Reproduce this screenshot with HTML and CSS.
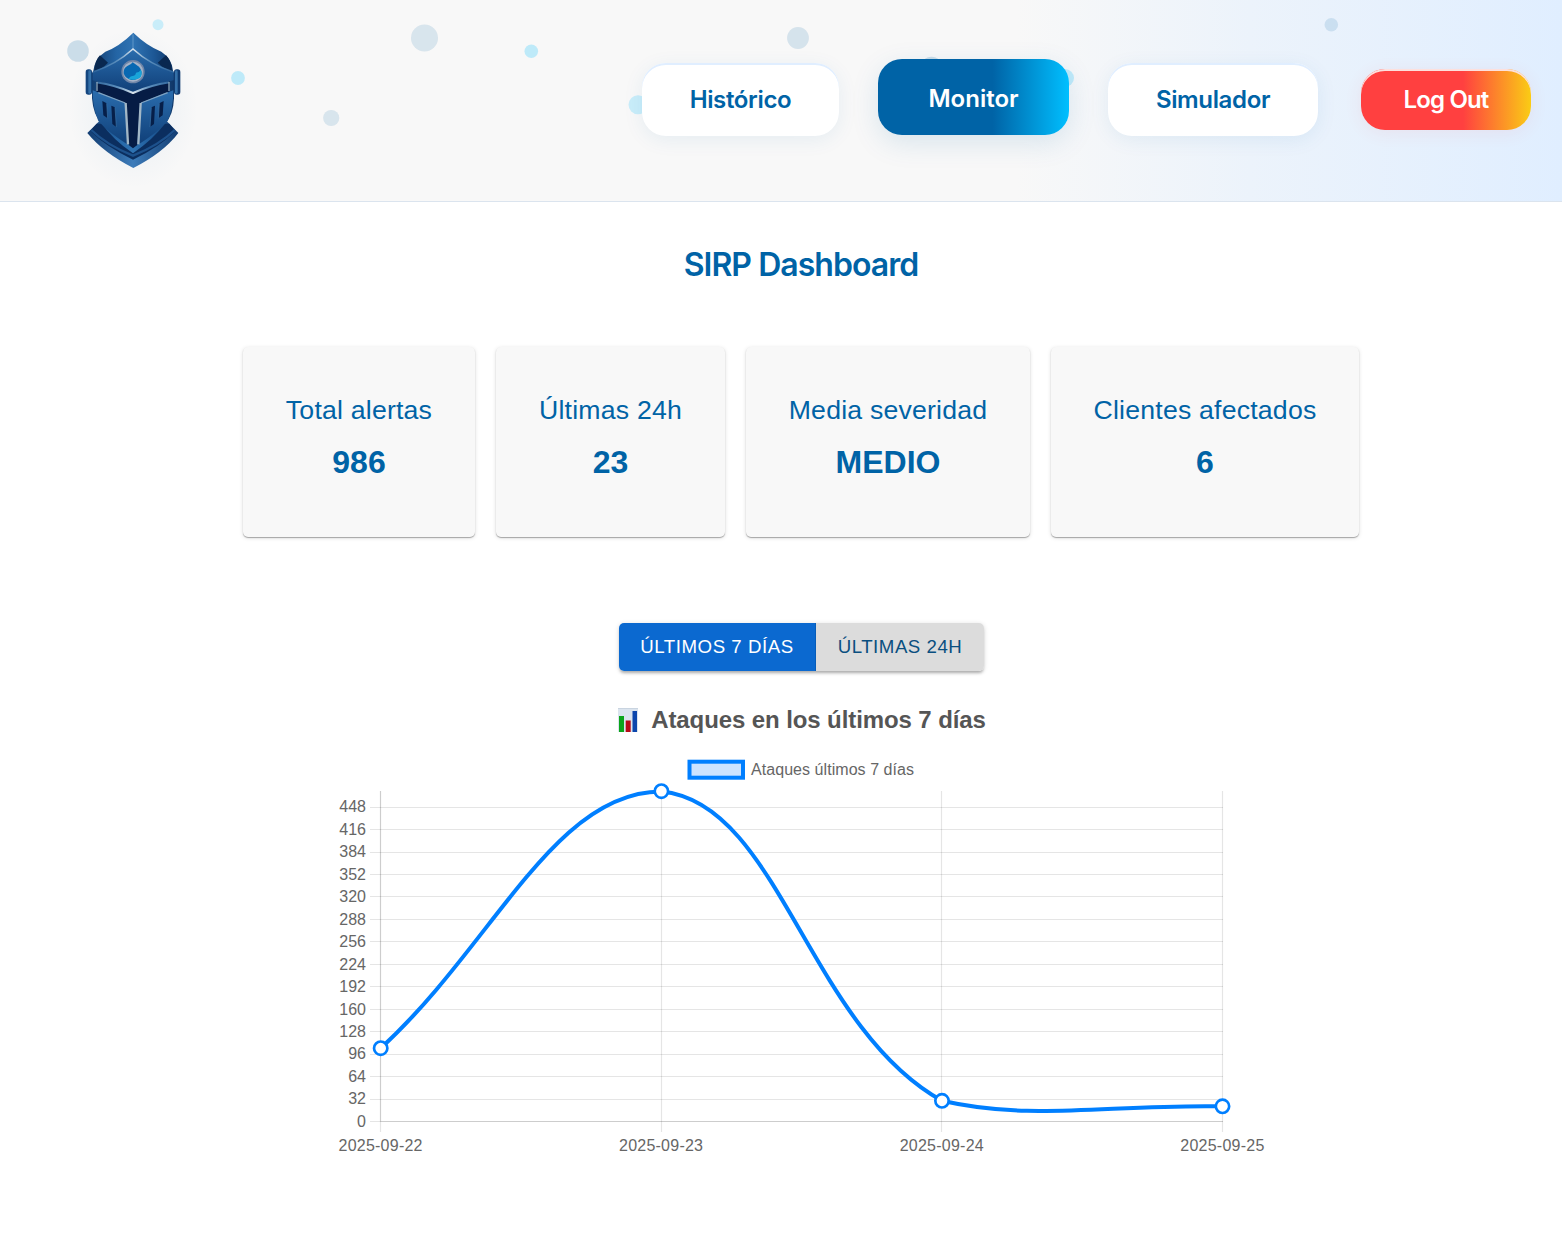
FILE: index.html
```html
<!DOCTYPE html>
<html lang="es">
<head>
<meta charset="utf-8">
<title>SIRP Dashboard</title>
<link rel="stylesheet" href="styles.css">
</head>
<body>
<header class="header">
  <svg class="bubbles" viewBox="0 0 1562 201" aria-hidden="true">
    <g fill="#0063a6">
      <circle cx="78" cy="51" r="10.8" opacity=".18"/>
      <circle cx="331.2" cy="118" r="8.1" opacity=".13"/>
      <circle cx="424.5" cy="38" r="13.5" opacity=".13"/>
      <circle cx="798" cy="38" r="10.9" opacity=".14"/>
      <circle cx="931.5" cy="67.500" r="10.8" opacity=".18"/>
      <circle cx="1331.300" cy="24.700" r="6.800" opacity=".13"/>
    </g>
    <g fill="#00bfff">
      <circle cx="158" cy="24.700" r="5.500" opacity=".19"/>
      <circle cx="238" cy="78" r="6.900" opacity=".23"/>
      <circle cx="531.300" cy="51.300" r="6.800" opacity=".23"/>
      <circle cx="638" cy="104.700" r="9.500" opacity=".19"/>
      <circle cx="1065" cy="78" r="9" opacity=".22"/>
    </g>
  </svg>
  <svg class="logo" viewBox="0 0 480 540" role="img" aria-label="SIRP">
    <defs>
      <linearGradient id="steel" x1="0" x2="1"><stop offset="0" stop-color="#123d70"/><stop offset=".3" stop-color="#2465a5"/><stop offset=".5" stop-color="#2f73b3"/><stop offset=".75" stop-color="#1d5896"/><stop offset="1" stop-color="#0f3666"/></linearGradient>
      <linearGradient id="plate" x1="0" x2="0" y1="0" y2="1"><stop offset="0" stop-color="#2a6dae"/><stop offset="1" stop-color="#103f78"/></linearGradient>
      <linearGradient id="rim" x1="0" x2="1"><stop offset="0" stop-color="#123d72"/><stop offset=".5" stop-color="#3d7cba"/><stop offset="1" stop-color="#123d72"/></linearGradient>
      <linearGradient id="edge" gradientUnits="userSpaceOnUse" x1="130" x2="369" y1="0" y2="0"><stop offset="0" stop-color="#2d649b"/><stop offset=".3" stop-color="#5c8fbd"/><stop offset=".5" stop-color="#dce6ee"/><stop offset=".7" stop-color="#5c8fbd"/><stop offset="1" stop-color="#2d649b"/></linearGradient>
      <radialGradient id="halo"><stop offset="0" stop-color="#0063a6" stop-opacity=".06"/><stop offset=".65" stop-color="#0063a6" stop-opacity=".025"/><stop offset="1" stop-color="#0063a6" stop-opacity="0"/></radialGradient>
    </defs>
    <ellipse cx="249" cy="295" rx="195" ry="240" fill="url(#halo)"/>
    <path d="M146 335L112 369Q160 428 250 474Q340 428 385 369L352 335Z" fill="url(#rim)"/>
    <path d="M140 341L121 363Q166 409 249 449Q332 409 376 363L358 341Z" fill="#0b2e5f"/>
    <path d="M124 360Q170 405 249 437Q328 405 374 360" fill="none" stroke="#1d518c" stroke-width="7"/>
    <path d="M250 68Q290 107 334 125Q366 146 369 182L372 190V265Q370 315 346 340Q310 388 249 430Q188 388 153 338Q130 315 126 265V190L130 182Q134 146 166 125Q207 110 250 68Z" fill="url(#steel)"/>
    <path d="M133 184Q134 151 150 136L174 158Q157 176 133 184ZM366 184Q364 151 348 136L323 158Q341 176 366 184Z" fill="#092850"/>
    <path d="M249 73V118" stroke="#5f96c7" stroke-width="3"/>
    <path d="M249 117Q196 167 128 187V211Q190 224 249 247Q308 224 371 211V187Q302 167 249 117Z" fill="url(#plate)"/>
    <path d="M129 186Q197 164 249 117Q301 164 370 186" fill="none" stroke="url(#edge)" stroke-width="5"/>
    <path d="M139 214Q198 225 249 249Q300 225 359 214V244L270 280L262 405L249 415L236 405L226 280L139 245Z" fill="#061c45"/>
    <path d="M139 217Q198 226 249 249Q300 226 358 217" fill="none" stroke="url(#edge)" stroke-width="6"/>
    <path d="M141 216V243M357 216V243" stroke="#8aa5ba" stroke-width="4"/>
    <path d="M128 241L227 279L234 404Q177 369 145 333Q128 293 128 241Z" fill="url(#plate)"/>
    <path d="M370 241L272 279L264 404Q321 369 353 333Q370 293 370 241Z" fill="url(#plate)"/>
    <path d="M145 248L226 279M353 248L273 279" fill="none" stroke="#7fa3c2" stroke-width="4"/>
    <path d="M227 279L234 403M272 279L265 403" stroke="#a3b7c6" stroke-width="7"/>
    <path d="M157 273L170 280L173 325L160 316ZM184 287L195 292L199 351L187 342ZM341 273L328 280L325 325L338 316ZM315 287L304 292L300 351L312 342Z" fill="#061f49"/>
    <path d="M170 280L173 325M195 292L199 351M328 280L325 325M304 292L300 351" stroke="#3973a8" stroke-width="2"/>
    <rect x="107" y="178" width="19" height="76" rx="8" fill="#14467f"/>
    <rect x="115" y="181" width="8" height="70" rx="4" fill="#3470a8"/>
    <rect x="372" y="178" width="19" height="76" rx="8" fill="#103b71"/>
    <rect x="375" y="181" width="8" height="70" rx="4" fill="#3470a8"/>
    <circle cx="249" cy="185" r="35" fill="#7086a8"/>
    <circle cx="249" cy="185" r="30" fill="#a5b3c8"/>
    <path d="M248 157L267 170Q279 184 272 199Q261 211 245 210Q225 205 221 190Q220 174 232 168Q244 164 248 157Z" fill="#0868b2"/>
    <path d="M273 179Q279 195 268 205Q251 213 235 206Q242 196 252 197Q258 194 258 188Q267 188 273 179Z" fill="#18a4d9"/>
  </svg>
  <nav class="nav">
    <a class="pill historico">Histórico</a>
    <a class="pill monitor">Monitor</a>
    <a class="pill simulador">Simulador</a>
    <a class="pill logout">Log Out</a>
  </nav>
</header>
<main class="main">
  <h1 class="title"><span>SIRP Dashboard</span></h1>
  <section class="cards">
    <article class="card card-total"><span class="label">Total alertas</span><strong>986</strong></article>
    <article class="card card-recent"><span class="label">Últimas 24h</span><strong>23</strong></article>
    <article class="card card-severity"><span class="label">Media severidad</span><strong>MEDIO</strong></article>
    <article class="card card-clients"><span class="label">Clientes afectados</span><strong>6</strong></article>
  </section>
  <div class="toggle">
    <button class="toggle-week">ÚLTIMOS 7 DÍAS</button>
    <button class="toggle-day">ÚLTIMAS 24H</button>
  </div>
  <h2 class="chart-title">
    <svg class="bars" viewBox="0 0 20 24" aria-hidden="true"><path fill="#dbe4ee" d="M0 0h20v24H0z"/><path stroke="#c9d4e0" d="M0 .5h20"/><path fill="#0ba51b" d="M1 8h5v16H1z"/><path fill="#b90b17" d="M7.700 12.500h5V24h-5z"/><path fill="#0c46ac" d="M14.500 3H19v21h-4.500z"/></svg>
    <span>Ataques en los últimos 7 días</span>
  </h2>
  <svg class="chart" viewBox="320 750 980 420">
    <rect x="689.500" y="761.700" width="53.500" height="16" fill="#cce3ff" stroke="#007fff" stroke-width="4"/>
    <text x="751" y="775" textLength="163">Ataques últimos 7 días</text>
    <g stroke="#000" stroke-opacity=".1" stroke-width="1.200">
      <path d="M370 807.500H1223M370 829.500H1223M370 852.500H1223M370 874.500H1223M370 896.500H1223M370 919.500H1223M370 941.500H1223M370 964.500H1223M370 986.500H1223M370 1009.500H1223M370 1031.500H1223M370 1054.500H1223M370 1076.500H1223M370 1099.500H1223M370 1121.500H1223"/>
      <path d="M380.500 791V1132M661.500 791V1132M941.500 791V1132M1222.500 791V1132"/>
      <path d="M380.500 791V1122M380.500 1121.500H1223"/>
    </g>
    <g text-anchor="end">
      <text x="366" y="812">448</text><text x="366" y="835">416</text><text x="366" y="857">384</text><text x="366" y="880">352</text><text x="366" y="902">320</text><text x="366" y="925">288</text><text x="366" y="947">256</text><text x="366" y="970">224</text><text x="366" y="992">192</text><text x="366" y="1015">160</text><text x="366" y="1037">128</text><text x="366" y="1059">96</text><text x="366" y="1082">64</text><text x="366" y="1104">32</text><text x="366" y="1127">0</text>
    </g>
    <g text-anchor="middle">
      <text x="380.500" y="1151" textLength="84">2025-09-22</text><text x="661" y="1151" textLength="84">2025-09-23</text><text x="941.700" y="1151" textLength="84">2025-09-24</text><text x="1222.300" y="1151" textLength="84">2025-09-25</text>
    </g>
    <path d="M380.700 1048.200C493 945.500 554 791.500 661.400 791.500C779 802.600 807.300 1025.800 942 1100.800C1032 1121.500 1110 1104 1222.500 1106.300" fill="none" stroke="#007fff" stroke-width="4"/>
    <g fill="#fff" stroke="#007fff" stroke-width="2.670">
      <circle cx="380.700" cy="1048.200" r="6.670"/><circle cx="661.400" cy="791.200" r="6.670"/><circle cx="942" cy="1100.800" r="6.670"/><circle cx="1222.500" cy="1106.300" r="6.670"/>
    </g>
  </svg>
</main>
</body>
</html>
```
FILE: styles.css
```css
* { box-sizing: border-box; }

body {
  margin: 0;
  min-height: 1250px;
  background: #fff;
  font-family: "Liberation Sans", Arial, sans-serif;
}

.header {
  position: relative;
  display: flex;
  justify-content: space-between;
  height: 202px;
  padding: 10px 31px 0 50px;
  border-bottom: 1px solid #dbe4ee;
  background: linear-gradient(90deg, #f8f8f8 65%, #ecf3fb 80%, #e0eeff 100%);
}

.bubbles {
  position: absolute;
  top: 0;
  left: 0;
  width: 1562px;
  height: 201px;
}

.logo {
  position: relative;
  width: 160px;
  height: 180px;
}

.nav {
  position: relative;
  display: flex;
  align-items: center;
  gap: 39px;
  height: 179px;
}

.pill {
  display: flex;
  align-items: center;
  justify-content: center;
  height: 73px;
  border-radius: 24px;
  background: #fff;
  box-shadow: inset 0 2px #e0eeff, 0 4px 20px rgba(0, 99, 166, .08);
  color: #0063a6;
  font: 600 24px Inter, sans-serif;
  letter-spacing: -.35px;
}

.historico { width: 197px; }

.monitor {
  width: 191px;
  height: 76px;
  margin-bottom: 5px;
  padding-top: 2px;
  background: linear-gradient(90deg, #0063a6 60%, #00bfff 100%);
  box-shadow: 0 8px 28px rgba(0, 99, 166, .13);
  color: #fff;
  letter-spacing: 0;
}

.simulador { width: 210px; }

.logout {
  width: 170px;
  height: 61px;
  margin-left: 4px;
  padding-bottom: 1px;
  background: linear-gradient(90deg, #ff4040 60%, #facc15 100%);
  box-shadow: inset 0 2px #fde0dd, 0 3px 18px rgba(255, 64, 64, .08);
  color: #fff;
  letter-spacing: -.85px;
}

.main {
  display: flex;
  flex-direction: column;
  align-items: center;
  padding-left: 40px;
}

.title {
  margin: 43px 0 0;
  color: #0063a6;
  font: 600 32px/40px Inter, sans-serif;
  letter-spacing: -.95px;
}

.cards {
  display: flex;
  gap: 21px;
  margin-top: 62px;
}

.card {
  display: flex;
  flex-direction: column;
  align-items: center;
  height: 190px;
  padding-top: 42px;
  border-radius: 5px;
  background: #f8f8f8;
  box-shadow: 0 1px 1px rgba(0, 0, 0, .3), 0 1px 4px rgba(0, 0, 0, .13);
  color: #0063a6;
}

.card-total { width: 232px; }
.card-recent { width: 229px; }
.card-severity { width: 284px; }
.card-clients { width: 308px; }

.label {
  font-size: 26.67px;
  line-height: 42px;
  letter-spacing: .0075em;
}

.card strong {
  font-size: 32px;
  line-height: 36px;
  margin-top: 13px;
}

.toggle {
  display: flex;
  margin-top: 86px;
  border-radius: 5px;
  box-shadow: 0 3px 3px -1px rgba(0, 0, 0, .25), 0 1px 5px rgba(0, 0, 0, .15);
}

.toggle button {
  height: 48px;
  padding: 0 0 0 1px;
  border: 0;
  font: 18.67px "Liberation Sans", Arial, sans-serif;
  letter-spacing: .02857em;
}

.toggle .toggle-week {
  width: 197px;
  border-right: 1px solid #075db9;
  border-radius: 5px 0 0 5px;
  background: #0b69d0;
  color: #fff;
}

.toggle .toggle-day {
  width: 168px;
  border-radius: 0 5px 5px 0;
  background: #dcdcdc;
  color: #0a4f80;
}

.chart-title {
  display: flex;
  align-items: center;
  gap: 13px;
  height: 30px;
  margin: 34px 0 0 2px;
  color: #555;
  font-size: 24px;
  line-height: 30px;
  letter-spacing: -.1px;
}

.bars {
  width: 20px;
  height: 24px;
  margin-bottom: 1px;
}

.chart {
  width: 980px;
  height: 420px;
  margin: 15px 0 0 18px;
  fill: #666;
  font-size: 16px;
}
```
